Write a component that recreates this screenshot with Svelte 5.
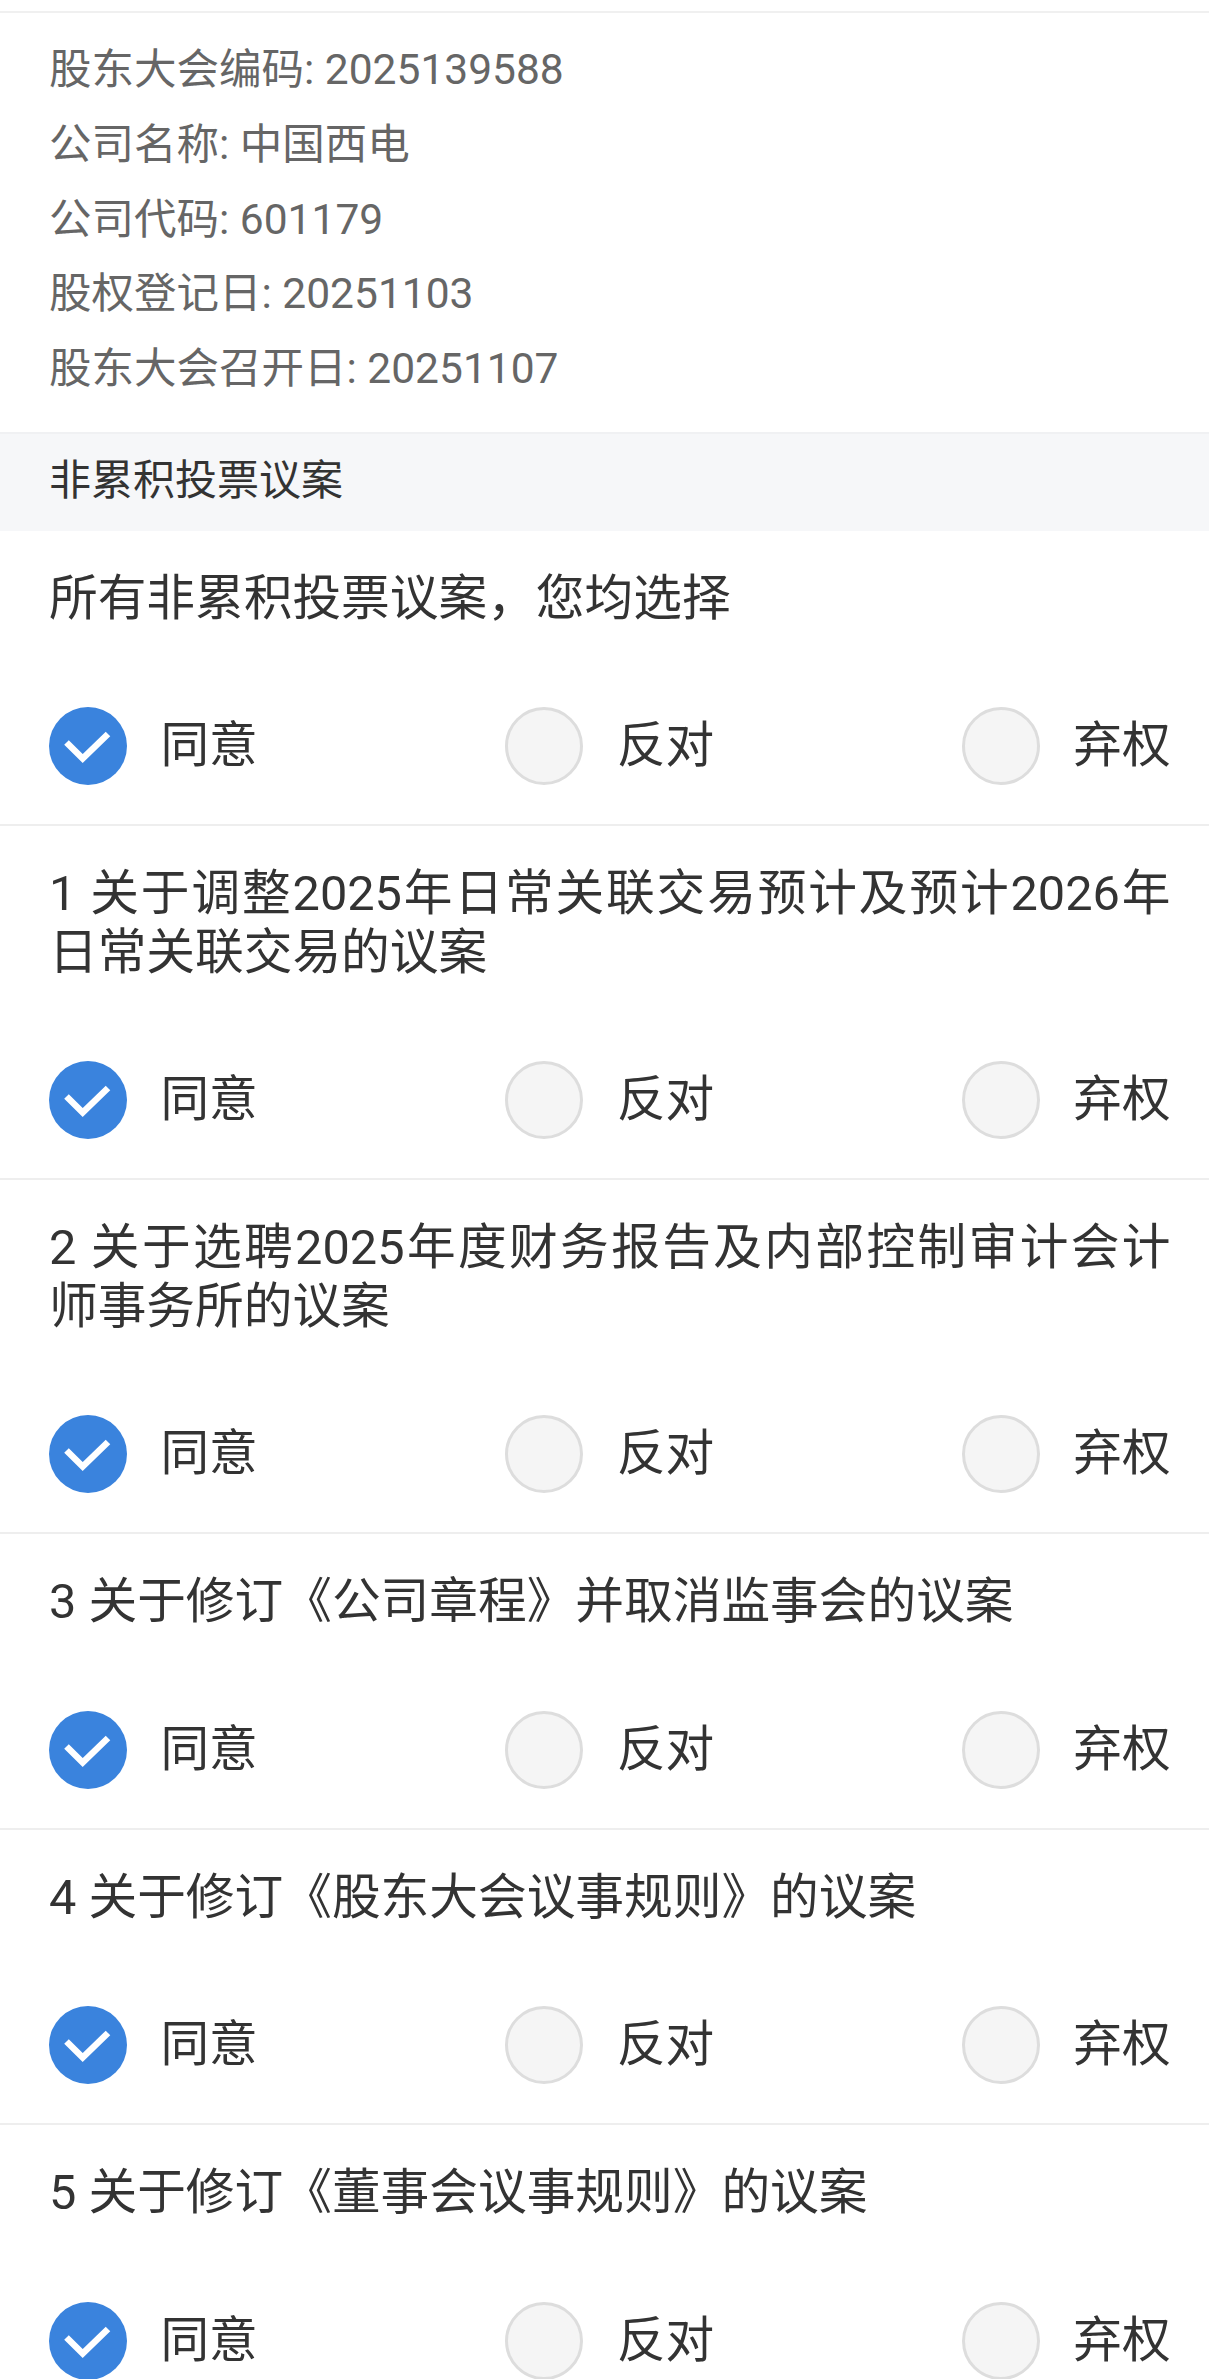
<script>
    const info = [
        "股东大会编码: 2025139588",
        "公司名称: 中国西电",
        "公司代码: 601179",
        "股权登记日: 20251103",
        "股东大会召开日: 20251107",
    ];
    // lines are broken by hand, the full ones get justified
    const questions = [
        ["所有非累积投票议案，您均选择"],
        ["1 关于调整2025年日常关联交易预计及预计2026年", "日常关联交易的议案"],
        ["2 关于选聘2025年度财务报告及内部控制审计会计", "师事务所的议案"],
        ["3 关于修订《公司章程》并取消监事会的议案"],
        ["4 关于修订《股东大会议事规则》的议案"],
        ["5 关于修订《董事会议事规则》的议案"],
    ];
    const options = ["同意", "反对", "弃权"];
</script>

<div class="page">
    <div class="info">
        {#each info as line}
            <p>{line}</p>
        {/each}
    </div>

    <div class="section">非累积投票议案</div>

    {#each questions as lines}
        <div class="row">
            <div class="question">
                {#each lines as line, n}
                    <div class:full={n < lines.length - 1}>{line}</div>
                {/each}
            </div>
            <div class="options">
                {#each options as opt, i}
                    <div class="option">
                        {#if i === 0}
                            <span class="radio checked">
                                <svg viewBox="0 0 78 78" width="78" height="78">
                                    <path d="M17.5 35.5 L33.7 51.5 L59 27" fill="none" stroke="#fff" stroke-width="6.5" />
                                </svg>
                            </span>
                        {:else}
                            <span class="radio"></span>
                        {/if}
                        <span class="label">{opt}</span>
                    </div>
                {/each}
            </div>
        </div>
    {/each}
</div>

<style>
    :global(body) {
        background: #fff;
    }
    .page {
        height: 2379px;
        overflow: hidden;
        background: #fff;
        font-family: Roboto, "Noto Sans CJK SC", sans-serif;
        padding-top: 11px;
        box-sizing: border-box;
    }
    .info {
        border-top: 2px solid #f0f0f0;
        padding: 20px 49px 25px;
    }
    .info p {
        margin: 0;
        font-size: 42.5px;
        line-height: 74.8px;
        color: #666;
    }
    .section {
        height: 99px;
        line-height: 94px;
        padding-left: 49px;
        font-size: 42px;
        color: #333;
        background: #f6f7f9;
        border-top: 2px solid #f0f1f3;
        box-sizing: border-box;
    }
    .row {
        padding: 39px 38.5px 39px 49px;
        border-bottom: 2px solid #eee;
    }
    .question {
        font-size: 48.7px;
        line-height: 58.5px;
        color: #333;
        margin-bottom: 79px;
    }
    .full {
        text-align: justify;
        text-align-last: justify;
    }
    .options {
        display: flex;
        justify-content: space-between;
    }
    .option {
        display: flex;
        align-items: center;
        gap: 33.5px;
    }
    .radio {
        width: 78px;
        height: 78px;
        box-sizing: border-box;
        border-radius: 50%;
        border: 3px solid #ddd;
        background: #f5f5f5;
        display: block;
    }
    .radio.checked {
        border: none;
        background: #3a83dd;
    }
    .radio svg {
        display: block;
    }
    .label {
        font-size: 48.6px;
        line-height: 58px;
        color: #333;
    }
</style>
